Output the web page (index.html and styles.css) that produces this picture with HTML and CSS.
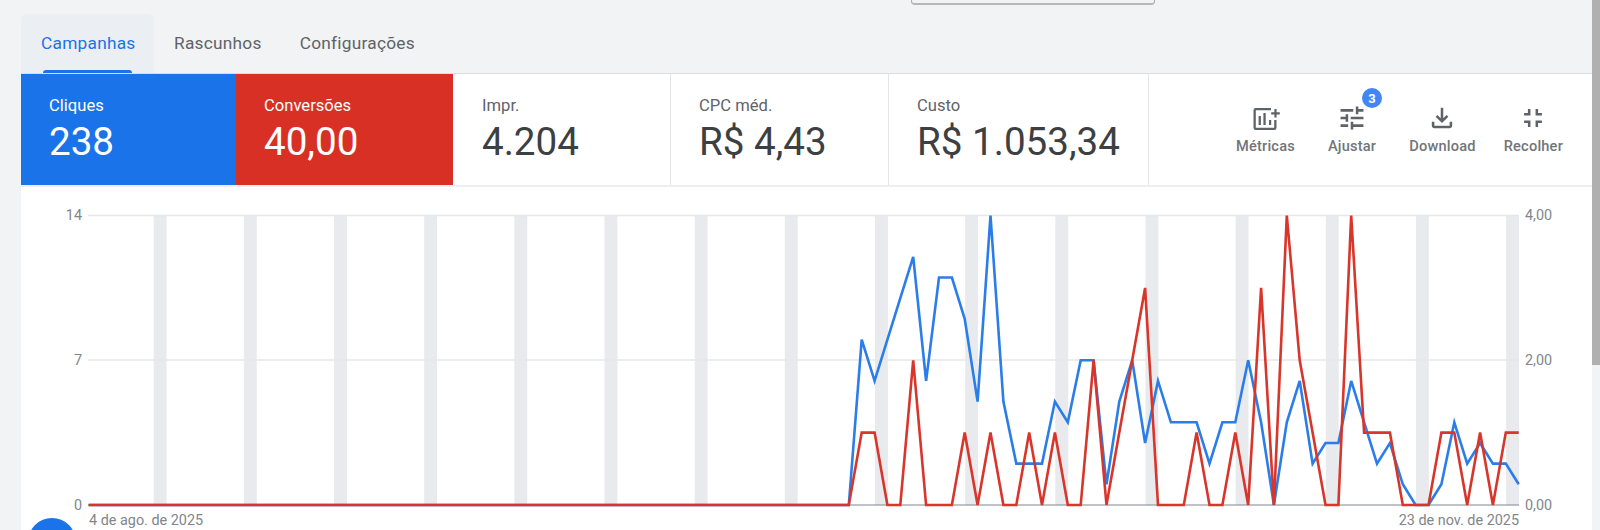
FILE: index.html
```html
<!DOCTYPE html>
<html lang="pt-BR">
<head>
<meta charset="utf-8">
<title>Campanhas</title>
<link rel="stylesheet" href="styles.css">
</head>
<body>
<div class="top-box"></div>
<nav class="tabs">
  <a class="tab active">Campanhas</a>
  <a class="tab second">Rascunhos</a>
  <a class="tab">Configurações</a>
</nav>
<main class="card">
  <section class="scorecards">
    <div class="score blue"><span class="label">Cliques</span><span class="value">238</span></div>
    <div class="score red"><span class="label">Conversões</span><span class="value">40,00</span></div>
    <div class="score impr"><span class="label">Impr.</span><span class="value">4.204</span></div>
    <div class="score cpc"><span class="label">CPC méd.</span><span class="value">R$ 4,43</span></div>
    <div class="score wide"><span class="label">Custo</span><span class="value">R$ 1.053,34</span></div>
    <div class="actions">
      <div class="action">
        <svg viewBox="0 0 28 28" class="icon"><path d="M3.8 4H19v2.3H3.8v17.4h18.4V16h2.3v7.7a2.3 2.3 0 0 1-2.3 2.3H3.8a2.3 2.3 0 0 1-2.3-2.3V6.3A2.3 2.3 0 0 1 3.8 4zM6.6 12h2.3v9H6.6zm4.8-3h2.3v12h-2.3zm5.6 7h2.2v5H17zM22.4 5h2.2v3.2h3.2v2.2h-3.2v3.2h-2.2v-3.2h-3.2V8.2h3.2z" fill="#5f6368"/></svg>
        <span>Métricas</span>
      </div>
      <div class="action nudge">
        <span class="badge">3</span>
        <svg viewBox="1 1 22 22" class="icon"><path d="M3 17v2h6v-2zM3 5v2h10V5zm10 16v-2h8v-2h-8v-2h-2v6zM7 9v2H3v2h4v2h2V9zm14 4v-2H11v2zm-6-4h2V7h4V5h-4V3h-2z" fill="#5f6368"/></svg>
        <span>Ajustar</span>
      </div>
      <div class="action nudge">
        <svg viewBox="1 1 22 22" class="icon"><path d="M18 15v3H6v-3H4v3c0 1.1.9 2 2 2h12c1.1 0 2-.9 2-2v-3h-2zm-1-4-1.41-1.41L13 12.17V4h-2v8.17L8.41 9.59 7 11l5 5 5-5z" fill="#5f6368"/></svg>
        <span>Download</span>
      </div>
      <div class="action last">
        <svg viewBox="1 1 22 22" class="icon"><path d="M5 16h3v3h2v-5H5v2zm3-8H5v2h5V5H8v3zm6 11h2v-3h3v-2h-5v5zm2-11V5h-2v5h5V8h-3z" fill="#5f6368"/></svg>
        <span>Recolher</span>
      </div>
    </div>
  </section>
  <section class="chart">
    <svg id="plot" class="plot" viewBox="0 0 1571 343"></svg>
    <span class="axis-note left">4 de ago. de 2025</span>
    <span class="axis-note right">23 de nov. de 2025</span>
  </section>
</main>
<div class="fab-clip"><div class="fab"></div></div>
<div class="scroll-track"><div class="scroll-thumb"></div></div>
<script src="chart.js"></script>
</body>
</html>
```
FILE: styles.css
```css
* { box-sizing: border-box; }
html, body { height: 100%; }
body {
  margin: 0;
  height: 530px;
  overflow: hidden;
  background: #f1f3f4;
  font-family: Roboto, "Liberation Sans", sans-serif;
  padding: 14px 8px 0 21px;
  position: relative;
}
.top-box {
  position: absolute;
  left: 911px;
  top: 0;
  width: 244px;
  height: 5px;
  border: 1px solid #a9abae;
  border-top: 0;
  border-bottom: 2px solid #b4b6b9;
  border-radius: 0 0 4px 4px;
}
.tabs { display: flex; height: 59px; }
.tab {
  display: flex;
  align-items: center;
  padding: 0 19px 2px;
  font-size: 17.3px;
  letter-spacing: 0.25px;
  color: #5f6368;
  position: relative;
}
.tab.second { margin-left: 1px; }
.tab.active {
  color: #1a73e8;
  background: #ebeff3;
  border-radius: 6px 6px 0 0;
  width: 133px;
  padding: 0 0 2px 20px;
}
.tab.active::after {
  content: "";
  position: absolute;
  left: 22px;
  width: 89px;
  bottom: 0;
  height: 3px;
  background: #1a73e8;
  border-radius: 3px 3px 0 0;
}
.card {
  background: #fff;
  border-top: 1px solid #dadce0;
  height: 457px;
}
.scorecards {
  display: flex;
  height: 113px;
  border-bottom: 2px solid #eceef0;
}
.score {
  width: 217px;
  display: flex;
  flex-direction: column;
  padding: 23px 0 0 28px;
  border-right: 1px solid #e3e5e8;
  color: #3c4043;
}
.score .label { font-size: 16.6px; line-height: 18px; color: #5f6368; }
.score .value { font-size: 38.6px; line-height: 44px; margin-top: 5px; white-space: nowrap; }
.score.blue { width: 215px; background: #1a73e8; border: 0; }
.score.red { width: 217px; background: #d93025; border: 0; }
.score.blue .label, .score.red .label, .score.blue .value, .score.red .value { color: #fff; }
.score.impr { width: 218px; padding-left: 29px; }
.score.cpc { width: 218px; }
.score.wide { width: 260px; }
.actions {
  flex: 1;
  display: flex;
  justify-content: flex-end;
  gap: 32px;
  padding-right: 29px;
}
.action {
  position: relative;
  display: flex;
  flex-direction: column;
  align-items: center;
  font-size: 14.6px;
  font-weight: 500;
  color: #70757a;
  padding-top: 30px;
  letter-spacing: 0.2px;
}
.action.nudge { margin-left: 1px; }
.action.last { margin-left: -4px; }
.icon { width: 28px; height: 28px; margin-bottom: 5px; display: block; }
.badge {
  position: absolute;
  left: 34px;
  top: 14px;
  width: 20px;
  height: 20px;
  border-radius: 50%;
  background: #4285f4;
  color: #fff;
  font-size: 13px;
  font-weight: 700;
  display: flex;
  align-items: center;
  justify-content: center;
}
.chart { position: relative; height: 343px; }
.plot { display: block; width: 1571px; height: 343px; }
.plot text { font-family: Roboto, "Liberation Sans", sans-serif; font-size: 14.4px; fill: #80868b; }
.axis-note { position: absolute; top: 325px; font-size: 14.4px; line-height: 17px; color: #80868b; }
.axis-note.left { left: 68px; }
.axis-note.right { right: 73px; }
.fab-clip {
  position: absolute;
  left: 28px;
  top: 518px;
  width: 48px;
  height: 12px;
  overflow: hidden;
}
.fab {
  width: 48px;
  height: 48px;
  border-radius: 50%;
  background: #1a73e8;
}
.scroll-track { position: absolute; right: 0; top: 0; width: 8px; height: 530px; background: #f1f3f4; }
.scroll-thumb { width: 8px; height: 365px; background: #b0b0b0; }
```
FILE: chart.js
```js
var blue = [8,6,8,10,12,6,11,11,9,5,14,5,2,2,2,5,4,7,7,1,5,7,3,6,4,4,4,2,4,4,7,4,0,4,6,2,3,3,6,4,2,3,1,0,0,1,4,2,3,2,2,1];
var red = [1,1,0,0,2,0,0,0,1,0,1,0,0,1,0,1,0,0,2,0,1,2,3,0,0,0,1,0,0,1,0,3,0,4,2,1,0,0,4,1,1,1,0,0,0,1,1,0,1,0,1,1];
var svg = document.getElementById("plot");
var NS = "http://www.w3.org/2000/svg";
var OX = -21, OY = -187;          /* svg origin relative to page */
var x0 = 88.7, step = 12.883, yTop = 215.5, yZero = 505;
function el(name, attrs, text) {
  var e = document.createElementNS(NS, name);
  for (var k in attrs) e.setAttribute(k, attrs[k]);
  if (text) e.textContent = text;
  svg.appendChild(e);
  return e;
}
function X(i) { return x0 + step * i + OX; }
function series(data, max, color) {
  var pts = [];
  for (var i = 0; i < 112; i++) {
    var v = i < 60 ? 0 : data[i - 60];
    var y = yZero - (yZero - yTop) * v / max + OY;
    pts.push(X(i).toFixed(1) + "," + y.toFixed(1));
  }
  el("polyline", { points: pts.join(" "), fill: "none", stroke: color, "stroke-width": 2.6, "stroke-linejoin": "miter" });
}
for (var k = 0; k < 16; k++) {
  el("rect", { x: 153.7 + 90.16 * k + OX, y: yTop + OY, width: 12.9, height: yZero - yTop, fill: "#e8eaed" });
}
el("line", { x1: 88 + OX, x2: 1519 + OX, y1: yTop + OY, y2: yTop + OY, stroke: "#e6e7e9", "stroke-width": 1.5 });
el("line", { x1: 88 + OX, x2: 1519 + OX, y1: 360 + OY, y2: 360 + OY, stroke: "#e6e7e9", "stroke-width": 1.5 });
el("line", { x1: 88 + OX, x2: 1519 + OX, y1: yZero + OY, y2: yZero + OY, stroke: "#80868b", "stroke-width": 1 });
series(blue, 14, "#2b7de9");
series(red, 4, "#d8352b");
var ly = [["14", "4,00", 220], ["7", "2,00", 365], ["0", "0,00", 510]];
ly.forEach(function (r) {
  el("text", { x: 82 + OX, y: r[2] + OY, "text-anchor": "end" }, r[0]);
  el("text", { x: 1525 + OX, y: r[2] + OY }, r[1]);
});
```
